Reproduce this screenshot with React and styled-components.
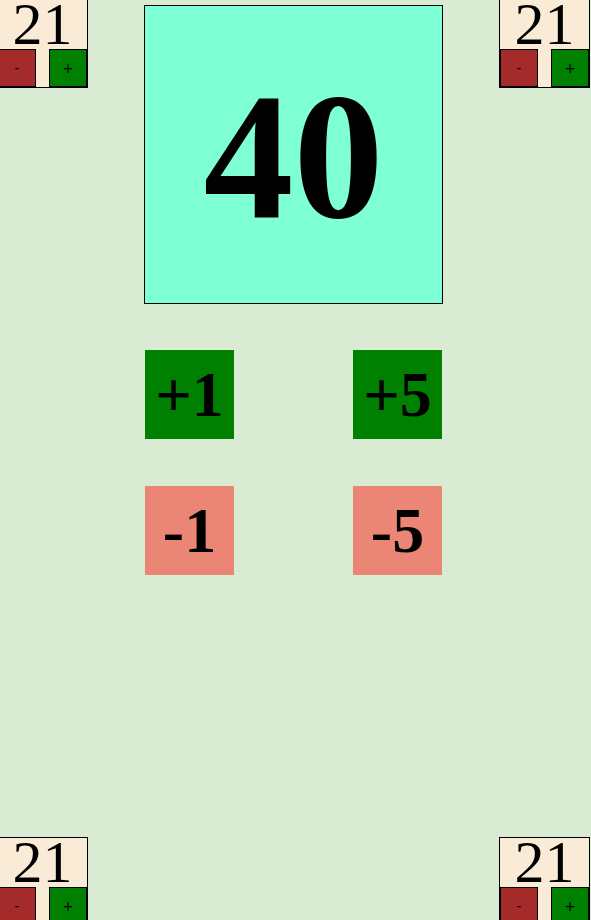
import React from "react";
import styled, { createGlobalStyle } from "styled-components";

const Global = createGlobalStyle`
  html, body {
    margin: 0;
    padding: 0;
    background: #d9ecd3;
  }
  #root {
    width: 591px;
  }
`;

const Page = styled.div`
  width: 591px;
  height: 920px;
  overflow: hidden;
  display: flex;
  flex-direction: column;
  background: #d9ecd3;
  font-family: "Liberation Serif", "Times New Roman", serif;
`;

const Row = styled.div`
  flex: none;
  display: flex;
  justify-content: space-between;
  align-items: flex-start;
  width: 593px;
  margin-left: -3px;
  margin-top: ${(p) => (p.$bottom ? "auto" : "-1px")};
  margin-bottom: ${(p) => (p.$bottom ? "-6px" : "0")};
`;

const Corner = styled.div`
  box-sizing: border-box;
  width: 91px;
  height: 89px;
  border: 1px solid #000;
  background: #faebd7;
  display: flex;
  flex-direction: column;
`;

const CornerValue = styled.div`
  height: 49px;
  line-height: 49px;
  font-size: 60px;
  text-align: center;
  color: #000;
`;

const CornerButtons = styled.div`
  display: flex;
  justify-content: space-between;
`;

const SmallButton = styled.button`
  box-sizing: border-box;
  width: 38px;
  height: 38px;
  margin: 0;
  padding: 0;
  border: 1px solid #000;
  background: ${(p) => (p.$minus ? "#a52a2a" : "#008000")};
  color: #000;
  font: 13.33px "DejaVu Sans", sans-serif;
  cursor: pointer;
`;

const Center = styled.div`
  width: 299px;
  margin-top: 6px;
  display: flex;
  flex-direction: column;
`;

const Counter = styled.div`
  box-sizing: border-box;
  height: 299px;
  padding-top: 4px;
  border: 1px solid #000;
  background: #7fffd4;
  display: flex;
  align-items: center;
  justify-content: center;
  font-size: 180px;
  font-weight: bold;
  color: #000;
`;

const Steps = styled.div`
  display: grid;
  grid-template-columns: 89px 89px;
  justify-content: space-between;
  row-gap: 47px;
  margin: 46px 1px 0;
`;

const StepButton = styled.button`
  width: 89px;
  height: 89px;
  margin: 0;
  padding: 0;
  border: none;
  background: ${(p) => (p.$minus ? "#eb8576" : "#008000")};
  color: #000;
  font: bold 64px "Liberation Serif", "Times New Roman", serif;
  cursor: pointer;
`;

function PlayerCorner({ value }) {
  return (
    <Corner>
      <CornerValue>{value}</CornerValue>
      <CornerButtons>
        <SmallButton $minus>-</SmallButton>
        <SmallButton>+</SmallButton>
      </CornerButtons>
    </Corner>
  );
}

export default function App() {
  return (
    <>
      <Global />
      <Page>
        <Row>
          <PlayerCorner value={21} />
          <Center>
            <Counter>40</Counter>
            <Steps>
              <StepButton>+1</StepButton>
              <StepButton>+5</StepButton>
              <StepButton $minus>-1</StepButton>
              <StepButton $minus>-5</StepButton>
            </Steps>
          </Center>
          <PlayerCorner value={21} />
        </Row>
        <Row $bottom>
          <PlayerCorner value={21} />
          <PlayerCorner value={21} />
        </Row>
      </Page>
    </>
  );
}
